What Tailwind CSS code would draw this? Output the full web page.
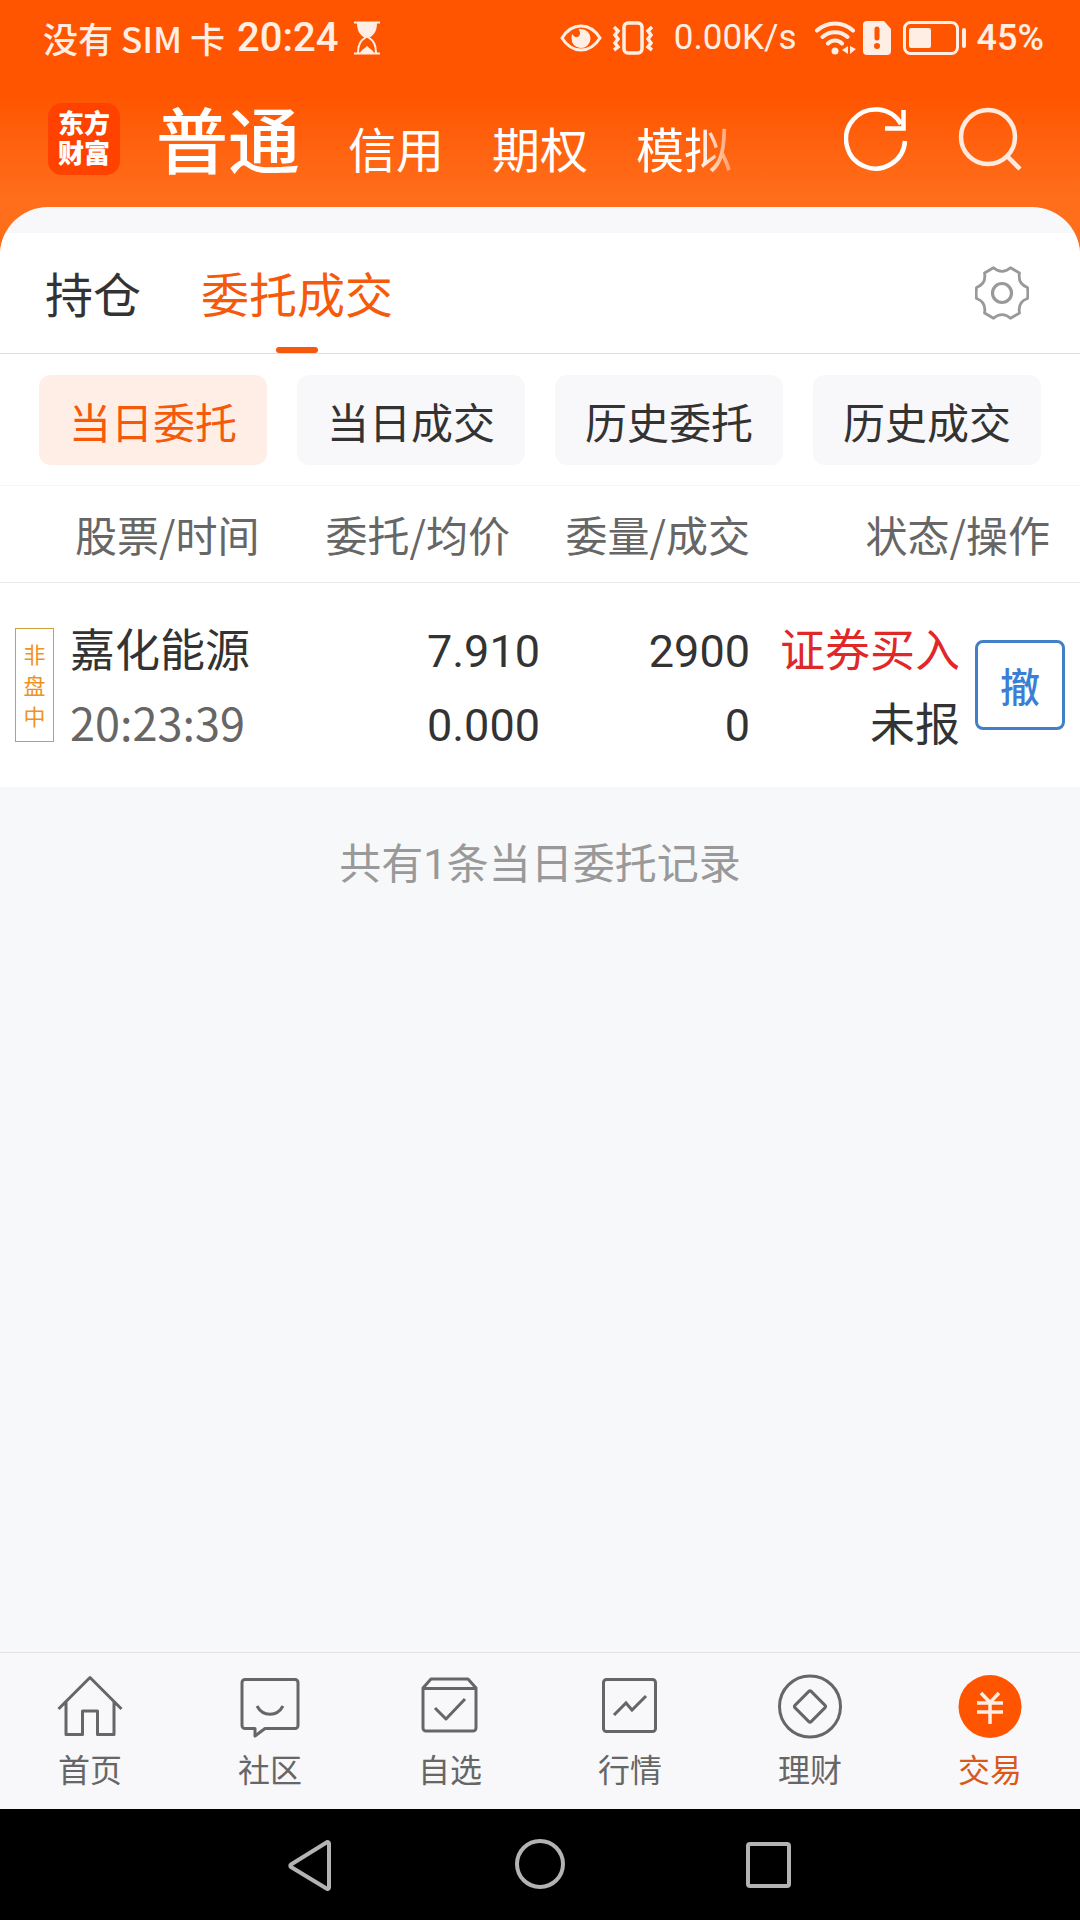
<!DOCTYPE html>
<html lang="zh-CN">
<head>
    <meta charset="UTF-8">
    <meta name="viewport" content="width=device-width, initial-scale=1.0">
    <title>委托成交</title>
    <script src="https://cdn.jsdelivr.net/npm/@tailwindcss/browser@4"></script>
</head>
<body class="min-h-screen flex flex-col bg-[#f7f8fa] text-[#333] font-['Noto_Sans_CJK_SC',sans-serif]">
<div class="bg-linear-to-b from-[#ff5500] from-27% to-[#ff6e1a] to-56%">
    <!-- status bar -->
    <div class="h-[75px] pl-[43px] pr-9 flex items-center justify-between text-[#ffeee4] text-[36px] leading-none font-['Roboto','Noto_Sans_CJK_SC',sans-serif]">
        <div class="flex items-center font-medium">
            <span class="text-[35px] font-['Noto_Sans_CJK_SC',sans-serif]">没有 SIM 卡</span>
            <span class="ml-3 text-[40px]">20:24</span>
            <svg class="ml-4 w-[26px] h-[34px]" viewBox="0 0 26 34" fill="none" stroke="currentColor" stroke-width="2">
                <path d="M0 1.500h26M0 32.500h26"/>
                <path d="M3 2h20c0 8-3 12-8 15h-4C6 14 3 10 3 2z" fill="currentColor" stroke="none"/>
                <path d="M12 16C6 20 4 24 4 32M14 16c6 4 8 8 8 16"/>
                <path d="M6 32c1-3 4-4 7-7 3 3 6 4 7 7z" fill="currentColor" stroke="none"/>
            </svg>
        </div>
        <div class="flex items-center">
            <svg class="w-[42px] h-[30px]" viewBox="0 0 42 30" fill="none" stroke="currentColor" stroke-width="3">
                <path d="M2 15C12-1 30-1 40 15 30 31 12 31 2 15z"/>
                <path d="M21 6a9.500 9.500 0 1 1-9.500 9c0-2 .5-3 1-4 1 3 4 4 6 2.500 2-1.500 2-5 0-7 1-.4 1.500-.5 2.500-.5z" fill="currentColor" stroke="none"/>
            </svg>
            <svg class="ml-2.5 w-[42px] h-[34px]" viewBox="0 0 42 34" fill="none" stroke="currentColor" stroke-width="3.500">
                <rect x="12" y="2" width="18" height="30" rx="4"/>
                <path d="M2 6l4 4-3 4 3 4-3 4 3 4-4 3M40 6l-4 4 3 4-3 4 3 4-3 4 4 3"/>
            </svg>
            <span class="ml-5 text-[35px]">0.00K/s</span>
            <svg class="ml-[18px] w-[42px] h-[34px]" viewBox="0 0 42 34" fill="none" stroke="currentColor" stroke-width="4" stroke-linecap="round">
                <path d="M2 9.500c10-9.500 26-9.500 36 0M7.500 16c7-6.500 18-6.500 25 0M13 22.500c4-4 10-4 14 0"/>
                <circle cx="20" cy="30" r="3.500" fill="currentColor" stroke="none"/>
                <path d="M33 25v8l-6-4zM35 25v8l6-5z" fill="currentColor" stroke="none"/>
            </svg>
            <svg class="ml-1.5 w-7 h-[34px]" viewBox="0 0 28 34">
                <path d="M4 0h17l7 8v22a4 4 0 0 1-4 4H4a4 4 0 0 1-4-4V4a4 4 0 0 1 4-4z" fill="currentColor"/>
                <path d="M14 8v9" stroke="#ff5500" stroke-width="5" stroke-linecap="round"/>
                <circle cx="14" cy="25" r="3" fill="#ff5500"/>
            </svg>
            <svg class="ml-3 w-[64px] h-[34px]" viewBox="0 0 64 34" fill="none" stroke="currentColor">
                <rect x="1.500" y="1.500" width="53" height="31" rx="6" stroke-width="3"/>
                <rect x="6" y="7" width="22" height="20" rx="2" fill="currentColor" stroke="none"/>
                <path d="M61 9v16" stroke-width="4" stroke-linecap="round"/>
            </svg>
            <span class="ml-2.5 font-medium">45%</span>
        </div>
    </div>
    <!-- account types -->
    <header class="h-[132px] pl-12 pr-[58px] pb-1 flex items-center text-white">
        <div class="size-[72px] rounded-[14px] bg-[#ff4200] flex items-center justify-center text-center text-[26px] leading-[30px] font-black font-['Roboto','Noto_Sans_CJK_SC',sans-serif]">
            <p class="w-[52px] break-all">东方财富</p>
        </div>
        <nav class="ml-9 pb-1 flex items-end gap-12 text-[48px] leading-[52px]">
            <a href="#" class="text-[72px] leading-none font-medium">普通</a>
            <a href="#">信用</a>
            <a href="#">期权</a>
            <a href="#" class="[mask-image:linear-gradient(to_right,black_66%,rgba(0,0,0,.35)_100%)]">模拟</a>
        </nav>
        <div class="ml-auto flex items-center gap-[50px]">
            <button aria-label="刷新">
                <svg class="block size-16" viewBox="0 0 64 64" fill="none" stroke="currentColor" stroke-width="4.500">
                    <path d="M61 34A29.500 29.500 0 1 1 57 17"/>
                    <path d="M41 21.500h18.500V3"/>
                </svg>
            </button>
            <button aria-label="搜索" class="text-[#ffeadf]">
                <svg class="block size-16" viewBox="0 0 64 64" fill="none" stroke="currentColor" stroke-width="4.500">
                    <circle cx="30" cy="30" r="27"/>
                    <path d="M49 49l13 13"/>
                </svg>
            </button>
        </div>
    </header>
    <div class="rounded-t-[48px] overflow-hidden bg-[#f8f8fa] pt-[26px]">
        <div class="h-[121px] bg-white border-b border-[#ddd] pl-[45px] pr-[51px] flex items-center justify-between">
            <nav class="h-full flex gap-[60px] text-[48px] leading-[118px]">
                <a href="#">持仓</a>
                <a href="#" class="relative text-[#f55a0c]">委托成交
                    <span class="absolute bottom-0 left-1/2 -translate-x-1/2 w-[42px] h-1.5 rounded-full bg-[#f55a0c]"></span>
                </a>
            </nav>
            <button aria-label="设置" class="text-[#999]">
                <svg class="block size-[54px]" viewBox="0 0 54 54" fill="none" stroke="currentColor" stroke-width="2.800" stroke-linejoin="round">
                    <path d="M18.500 1.800Q27 9 35.500 1.800L44.500 7Q42.500 18 52.500 21.500Q53.200 27 52.500 32.500Q42.500 36 44.500 47L35.500 52.200Q27 45 18.500 52.200L9.500 47Q11.500 36 1.500 32.500Q.8 27 1.500 21.500Q11.500 18 9.500 7Z"/>
                    <circle cx="27" cy="27" r="9.500" stroke-width="3.200"/>
                </svg>
            </button>
        </div>
    </div>
</div>
<main class="flex-1">
    <div class="bg-white px-[39px] pt-[21px] pb-5 grid grid-cols-4 gap-[30px] text-[42px] border-b border-[#f5f5f5]">
        <button class="h-[90px] rounded-xl bg-[#ffeee6] text-[#f55a0c]">当日委托</button>
        <button class="h-[90px] rounded-xl bg-[#f8f8fa]">当日成交</button>
        <button class="h-[90px] rounded-xl bg-[#f8f8fa]">历史委托</button>
        <button class="h-[90px] rounded-xl bg-[#f8f8fa]">历史成交</button>
    </div>
    <table class="w-full table-fixed bg-white">
        <thead>
            <tr class="h-24 border-b border-[#ebebeb] text-[42px] leading-[60px] text-[#666]">
                <th class="w-[28%] pl-[75px] text-left font-normal">股票/时间</th>
                <th class="w-[22%] pr-[30px] text-right font-normal">委托/均价</th>
                <th class="w-[210px] text-right font-normal">委量/成交</th>
                <th class="pr-[30px] text-right font-normal">状态/操作</th>
            </tr>
        </thead>
        <tbody>
            <tr class="h-[205px] text-[45px] leading-[74px]">
                <td>
                    <div class="pl-[15px] flex items-center gap-4">
                        <span class="w-[39px] h-[114px] border border-[#d0a040] text-[#f0931e] text-[22px] leading-[31px] flex flex-col items-center justify-center">
                            <span>非</span><span>盘</span><span>中</span>
                        </span>
                        <div>
                            <p>嘉化能源</p>
                            <p class="text-[#666]">20:23:39</p>
                        </div>
                    </div>
                </td>
                <td class="text-right">
                    <p><span class="font-['Roboto'] leading-none">7.910</span></p>
                    <p><span class="font-['Roboto'] leading-none">0.000</span></p>
                </td>
                <td class="text-right">
                    <p><span class="font-['Roboto'] leading-none">2900</span></p>
                    <p><span class="font-['Roboto'] leading-none">0</span></p>
                </td>
                <td>
                    <div class="pr-[15px] flex items-center justify-end gap-[15px] text-right">
                        <div>
                            <p class="text-[#e02828]">证券买入</p>
                            <p>未报</p>
                        </div>
                        <button class="size-[90px] rounded-lg border-3 border-[#4080c8] text-[#3a7fd5] text-[40px] leading-none font-medium">撤</button>
                    </div>
                </td>
            </tr>
        </tbody>
    </table>
    <p class="pt-11 text-center text-[42px] leading-[60px] text-[#999]">共有<span class="font-['Roboto'] leading-none">1</span>条当日委托记录</p>
</main>
<nav class="h-[157px] border-t border-[#e3e3e5] bg-[#f8f8fa] grid grid-cols-6 text-[32px] leading-[42px] text-[#666]">
    <a href="#" class="pt-5 flex flex-col items-center gap-2">
        <svg class="w-[66px] h-[66px]" viewBox="0 0 66 66" fill="none" stroke="currentColor" stroke-width="3">
            <path d="M1.500 36L33 4.500 64.500 36M9 29v32.500h16.500V38h15v23.500H57V29" stroke-linejoin="round"/>
        </svg>
        首页
    </a>
    <a href="#" class="pt-5 flex flex-col items-center gap-2">
        <svg class="w-[66px] h-[66px]" viewBox="0 0 66 66" fill="none" stroke="currentColor" stroke-width="3" stroke-linejoin="round">
            <path d="M8 6.500h50a3 3 0 0 1 3 3v43a3 3 0 0 1-3 3H28l-10 7.500v-7.500H8a3 3 0 0 1-3-3v-43a3 3 0 0 1 3-3z"/>
            <path d="M20 33c6 11 20 11 26 0"/>
        </svg>
        社区
    </a>
    <a href="#" class="pt-5 flex flex-col items-center gap-2">
        <svg class="w-[66px] h-[66px]" viewBox="0 0 66 66" fill="none" stroke="currentColor" stroke-width="3" stroke-linejoin="round">
            <path d="M6 15l8-9h37l8 9v40a3 3 0 0 1-3 3H9a3 3 0 0 1-3-3zM6 15.500h53"/>
            <path d="M18 35l11 11 19-20"/>
        </svg>
        自选
    </a>
    <a href="#" class="pt-5 flex flex-col items-center gap-2">
        <svg class="w-[66px] h-[66px]" viewBox="0 0 66 66" fill="none" stroke="currentColor" stroke-width="3">
            <rect x="6.500" y="6.500" width="52" height="52" rx="3"/>
            <path d="M17 42l12-12 6 7 14-14"/>
        </svg>
        行情
    </a>
    <a href="#" class="pt-5 flex flex-col items-center gap-2">
        <svg class="w-[66px] h-[66px]" viewBox="0 0 66 66" fill="none" stroke="currentColor" stroke-width="3">
            <circle cx="33" cy="33.500" r="30.500"/>
            <rect x="21.500" y="22" width="23" height="23" rx="2" transform="rotate(45 33 33.500)"/>
        </svg>
        理财
    </a>
    <a href="#" class="pt-5 flex flex-col items-center gap-2 text-[#d9591c]">
        <svg class="w-[66px] h-[66px]" viewBox="0 0 66 66" fill="none" stroke="#ffeee4" stroke-width="3.500">
            <circle cx="33" cy="33.500" r="31.500" fill="#ff5500" stroke="none"/>
            <path d="M24 20l9 9.500 9-9.500M33 29v22M20 30h26M20 39h26"/>
        </svg>
        交易
    </a>
</nav>
<!-- system keys -->
<div class="h-[111px] bg-black flex items-center justify-center gap-[178px] text-[#b3b3b3]">
    <button aria-label="返回">
        <svg class="block size-[52px]" viewBox="0 0 52 52" fill="none" stroke="currentColor" stroke-width="4" stroke-linejoin="round">
            <path d="M45 4.500v44a1.500 1.500 0 0 1-2.500 1L7 28a1.500 1.500 0 0 1 0-2.500L42.500 3.500A1.500 1.500 0 0 1 45 4.500z"/>
        </svg>
    </button>
    <button aria-label="主页">
        <svg class="block size-[52px]" viewBox="0 0 52 52" fill="none" stroke="currentColor" stroke-width="4">
            <circle cx="26" cy="25" r="23"/>
        </svg>
    </button>
    <button aria-label="最近任务">
        <svg class="block size-[52px]" viewBox="0 0 52 52" fill="none" stroke="currentColor" stroke-width="4">
            <rect x="4" y="5" width="41" height="42" rx="2"/>
        </svg>
    </button>
</div>
</body>
</html>
